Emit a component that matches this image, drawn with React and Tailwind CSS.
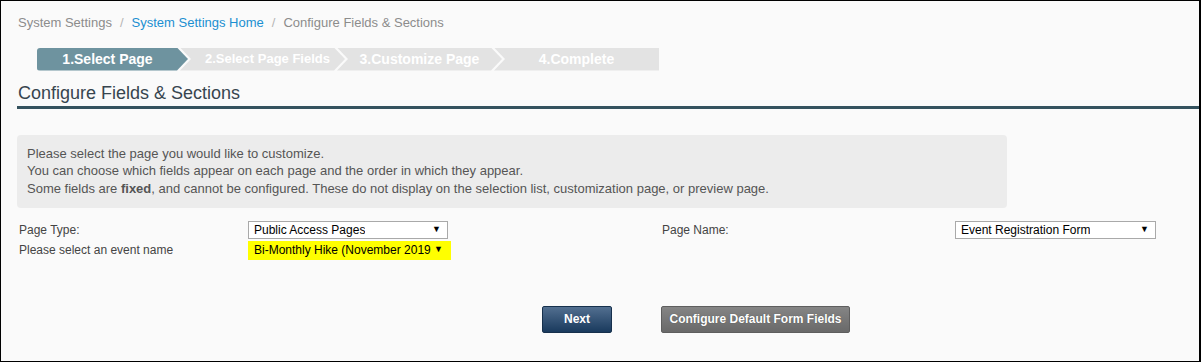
import React from "react";

const steps = [
  { label: "1.Select Page", active: true },
  { label: "2.Select Page Fields", pad: "pl-[10px] text-[13px]" },
  { label: "3.Customize Page", pad: "text-[14px]" },
  { label: "4.Complete", last: true },
];

function Select({ value, className = "" }) {
  return (
    <div
      className={
        "flex items-center justify-between h-[18px] border border-[#a9a9a9] bg-white pl-[5px] pr-[6px] text-[12px] text-black " +
        className
      }
    >
      <span className="truncate">{value}</span>
      <span className="text-[9px] ml-1">▼</span>
    </div>
  );
}

export default function App() {
  return (
    <div className="w-[1201px] h-[362px] bg-[#fafafa] border-t border-l border-b border-r-2 border-black font-['Liberation_Sans',Arial,sans-serif] overflow-hidden">
      {/* BREADCRUMB */}
      <div className="flex items-center gap-[8px] pl-[17px] pt-[12px] text-[13px] text-[#8c8c8c]">
        <span>System Settings</span>
        <span className="text-[#b5b5b5]">/</span>
        <span className="text-[#1b8fd1]">System Settings Home</span>
        <span className="text-[#b5b5b5]">/</span>
        <span>Configure Fields &amp; Sections</span>
      </div>

      {/* WIZARD */}
      <div className="flex pl-[36px] mt-[15px] h-[23px]">
        {steps.map((s) => (
          <div
            key={s.label}
            className={
              "flex items-center justify-center font-bold text-white " +
              (s.active
                ? "w-[151px] text-[14px] bg-[#6e939f] rounded-l-[3px] pr-[10px] [clip-path:polygon(0_0,calc(100%-11px)_0,100%_50%,calc(100%-11px)_100%,0_100%)]"
                : s.last
                ? "w-[165px] text-[14px] -ml-[8px] bg-[#e3e3e3] [clip-path:polygon(0_0,100%_0,100%_100%,0_100%,11px_50%)]"
                : "w-[165px] -ml-[8px] bg-[#e3e3e3] [clip-path:polygon(0_0,calc(100%-11px)_0,100%_50%,calc(100%-11px)_100%,0_100%,11px_50%)] " +
                  s.pad)
            }
          >
            {s.label}
          </div>
        ))}
      </div>

      {/* TITLE */}
      <div className="ml-[16px] mt-[11px] border-b-[3px] border-[#34525e] pb-[2px]">
        <h1 className="text-[18px] leading-[22px] text-[#37454f] pl-[1px]">
          Configure Fields &amp; Sections
        </h1>
      </div>

      {/* INFO */}
      <div className="ml-[16px] mt-[26px] w-[990px] h-[73px] rounded-[4px] bg-[#ececec] pl-[10px] pt-[10px] text-[13px] leading-[17.5px] text-[#555]">
        <p>Please select the page you would like to customize.</p>
        <p>You can choose which fields appear on each page and the order in which they appear.</p>
        <p>
          Some fields are <b>fixed</b>, and cannot be configured. These do not display on the
          selection list, customization page, or preview page.
        </p>
      </div>

      {/* FORM */}
      <div className="pl-[18px] mt-[13px] text-[12px] text-[#444]">
        <div className="flex items-center h-[19px]">
          <span className="w-[229px]">Page Type:</span>
          <Select value="Public Access Pages" className="w-[200px]" />
          <span className="w-[214px]" />
          <span className="w-[293px]">Page Name:</span>
          <Select value="Event Registration Form" className="w-[201px]" />
        </div>
        <div className="flex items-center h-[19px] mt-[1px]">
          <span className="w-[229px]">Please select an event name</span>
          <div className="w-[203px] h-[19px] bg-[#ffff00] flex items-center justify-between pl-[6px] pr-[8px] text-[12px] text-black">
            <span>Bi-Monthly Hike (November 2019</span>
            <span className="text-[9px]">▼</span>
          </div>
        </div>
      </div>

      {/* ACTIONS */}
      <div className="flex pl-[541px] mt-[46px] gap-[49px]">
        <button className="w-[70px] h-[27px] rounded-[2px] border border-[#16304c] bg-gradient-to-b from-[#526f90] to-[#193a5d] text-[12px] font-bold text-white">
          Next
        </button>
        <button className="w-[189px] h-[27px] rounded-[2px] border border-[#5e5e5e] bg-gradient-to-b from-[#858585] to-[#696969] text-[12px] font-bold text-white [text-shadow:0_0_1px_rgba(0,0,0,0.4)]">
          Configure Default Form Fields
        </button>
      </div>
    </div>
  );
}
